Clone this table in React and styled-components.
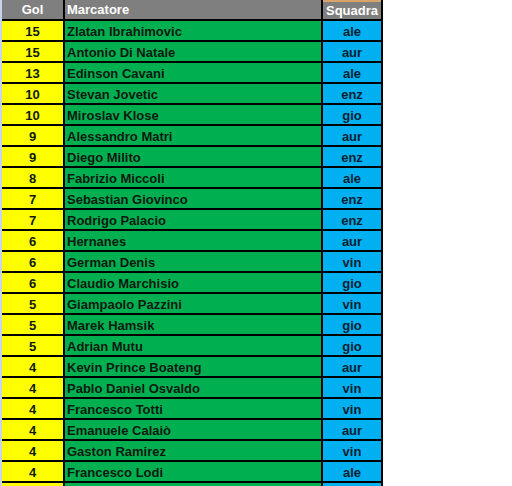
import React from 'react';
import styled, { createGlobalStyle } from 'styled-components';

const GlobalStyle = createGlobalStyle`
  html, body {
    margin: 0;
    padding: 0;
    background: #FFF;
    overflow: hidden;
  }
`;

const Sheet = styled.div`
  display: grid;
  grid-template-columns: 61px 256px 58px;
  column-gap: 2px;
  row-gap: 2px;
  width: max-content;
  background: #000;
  border-left: 2px solid #C5D6EC;
  border-right: 2px solid #000;
  font-family: "Liberation Sans", Arial, sans-serif;
  font-weight: 700;
  font-size: 13px;
`;

const HeadCell = styled.div`
  height: ${({top}) => (top ? '17px' : '19px')};
  background: #7F7F7F;
  color: #FFF;
  display: flex;
  align-items: center;
  justify-content: ${({left}) => (left ? 'flex-start' : 'center')};
  padding-left: ${({left}) => (left ? '2px' : '0')};
  border-top: ${({top}) => (top ? '2px solid #D9A46A' : 'none')};
`;

const bg = {
  gol: '#FFFF00',
  name: '#00B050',
  team: '#00B0F0',
};

const Cell = styled.div`
  height: 19px;
  padding-top: 1px;
  box-sizing: border-box;
  background: ${({kind}) => bg[kind]};
  color: ${({kind}) => (kind === 'team' ? '#0B1F33' : '#0F1A10')};
  display: flex;
  align-items: center;
  justify-content: ${({kind}) => (kind === 'name' ? 'flex-start' : 'center')};
  padding-left: ${({kind}) => (kind === 'name' ? '2px' : '0')};
  white-space: nowrap;
`;

const rows = [
  [15, 'Zlatan Ibrahimovic', 'ale'],
  [15, 'Antonio Di Natale', 'aur'],
  [13, 'Edinson Cavani', 'ale'],
  [10, 'Stevan Jovetic', 'enz'],
  [10, 'Miroslav Klose', 'gio'],
  [9, 'Alessandro Matri', 'aur'],
  [9, 'Diego Milito', 'enz'],
  [8, 'Fabrizio Miccoli', 'ale'],
  [7, 'Sebastian Giovinco', 'enz'],
  [7, 'Rodrigo Palacio', 'enz'],
  [6, 'Hernanes', 'aur'],
  [6, 'German Denis', 'vin'],
  [6, 'Claudio Marchisio', 'gio'],
  [5, 'Giampaolo Pazzini', 'vin'],
  [5, 'Marek Hamsik', 'gio'],
  [5, 'Adrian Mutu', 'gio'],
  [4, 'Kevin Prince Boateng', 'aur'],
  [4, 'Pablo Daniel Osvaldo', 'vin'],
  [4, 'Francesco Totti', 'vin'],
  [4, 'Emanuele Calaiò', 'aur'],
  [4, 'Gaston Ramirez', 'vin'],
  [4, 'Francesco Lodi', 'ale'],
  ['', '', ''],
];

function App(){
  return(
    <>
      <GlobalStyle/>
      <Sheet>
        <HeadCell>Gol</HeadCell>
        <HeadCell left>Marcatore</HeadCell>
        <HeadCell top>Squadra</HeadCell>
        {rows.map(([gol, name, team], i) => (
          <React.Fragment key={i}>
            <Cell kind="gol">{gol}</Cell>
            <Cell kind="name">{name}</Cell>
            <Cell kind="team">{team}</Cell>
          </React.Fragment>
        ))}
      </Sheet>
    </>
  );
}

export default App
